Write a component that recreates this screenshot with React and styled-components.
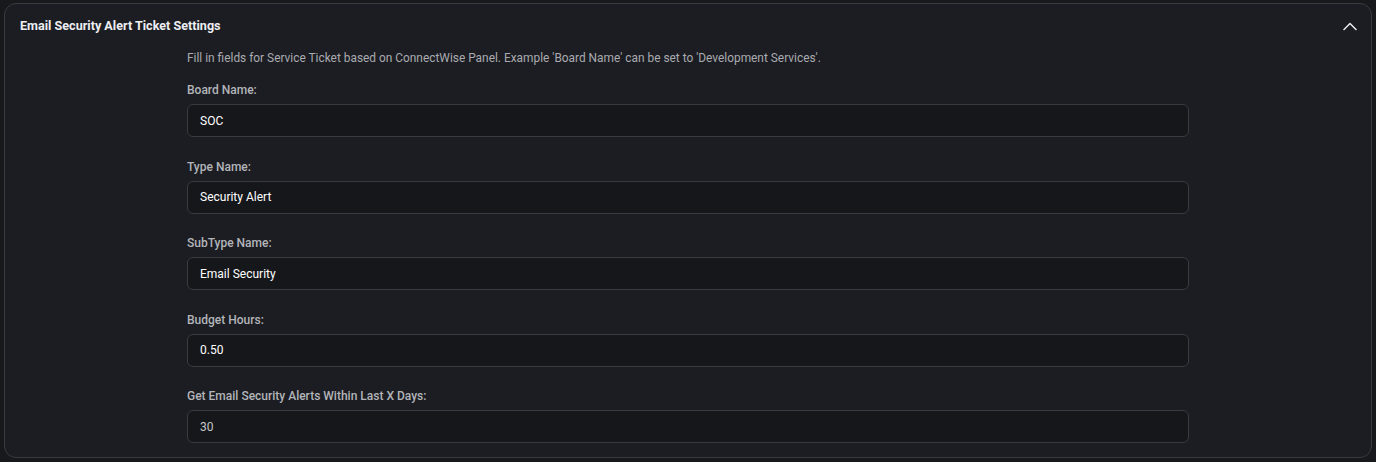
import React from "react";
import styled, { createGlobalStyle } from "styled-components";

const fields = [
  { label: "Board Name:", value: "SOC" },
  { label: "Type Name:", value: "Security Alert" },
  { label: "SubType Name:", value: "Email Security" },
  { label: "Budget Hours:", value: "0.50" },
  { label: "Get Email Security Alerts Within Last X Days:", value: "30", muted: true },
];

export default function App() {
  return (
    <>
      <GlobalStyle />
      <Page>
        <Panel>
          <Header>
            <Title>Email Security Alert Ticket Settings</Title>
            <Toggle aria-label="Collapse">
              <svg width="14" height="9" viewBox="0 0 14 9" fill="none">
                <polyline
                  points="1,7.5 7,1.5 13,7.5"
                  stroke="#e8eaee"
                  strokeWidth="1.5"
                  strokeLinecap="round"
                  strokeLinejoin="round"
                />
              </svg>
            </Toggle>
          </Header>
          <Body>
            <Description>
              Fill in fields for Service Ticket based on ConnectWise Panel. Example 'Board Name' can be set
              to 'Development Services'.
            </Description>
            {fields.map((f) => (
              <Field key={f.label}>
                <Label>{f.label}</Label>
                <Input defaultValue={f.value} $muted={f.muted} />
              </Field>
            ))}
          </Body>
        </Panel>
      </Page>
    </>
  );
}

const GlobalStyle = createGlobalStyle`
  * { box-sizing: border-box; }
  body {
    margin: 0;
    background: #18191d;
    font-family: Roboto, "Liberation Sans", sans-serif;
  }
`;

const Page = styled.div`
  padding: 3px 4px;
`;

const Panel = styled.section`
  background: #1c1d22;
  border: 1px solid #393a40;
  border-radius: 12px;
  padding-bottom: 14px;
`;

const Header = styled.div`
  display: flex;
  align-items: center;
  justify-content: space-between;
  height: 44px;
  padding: 0 13px 0 15px;
`;

const Title = styled.h2`
  margin: 0;
  font-size: 12.6px;
  font-weight: 700;
  color: #eceef2;
  line-height: 16px;
`;

const Toggle = styled.button`
  display: flex;
  align-items: center;
  justify-content: center;
  width: 16px;
  height: 16px;
  padding: 0;
  border: none;
  background: none;
  cursor: pointer;
`;

const Body = styled.div`
  width: 1002px;
  margin: 0 auto;
  padding-top: 2px;
  display: flex;
  flex-direction: column;
  gap: 21.5px;
`;

const Description = styled.p`
  margin: 0 0 -5.5px;
  font-size: 11.9px;
  line-height: 16px;
  color: #a9abb0;
`;

const Field = styled.div`
  display: flex;
  flex-direction: column;
  gap: 6px;
`;

const Label = styled.label`
  font-size: 12px;
  font-weight: 500;
  line-height: 16px;
  color: #b3b5ba;
`;

const Input = styled.input`
  height: 33px;
  width: 100%;
  padding: 0 12px;
  background: #16171b;
  border: 1px solid #3a3b41;
  border-radius: 6px;
  font-family: inherit;
  font-size: 12px;
  font-weight: 400;
  color: ${(p) => (p.$muted ? "#c4c6ca" : "#ffffff")};
  outline: none;
`;
